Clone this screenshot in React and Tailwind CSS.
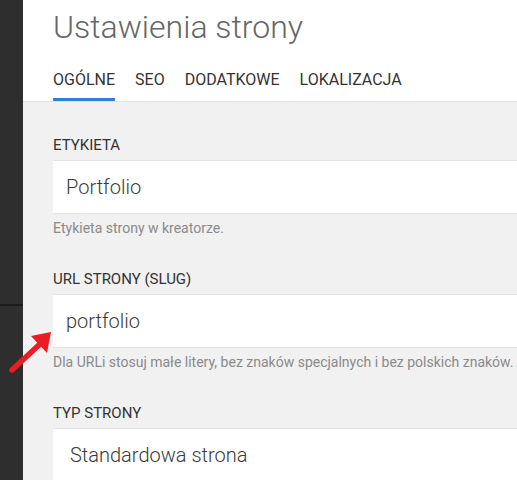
import React from "react";

const tabs = ["OGÓLNE", "SEO", "DODATKOWE", "LOKALIZACJA"];

function Field({ label, value, help, select }) {
  return (
    <div className="mb-8">
      <div className="text-[15px] leading-5 text-[#333] uppercase">{label}</div>
      <div
        className={`mt-[5px] h-[54px] flex items-center bg-white border-y border-[#e3e3e3] ${
          select ? "pl-[17px]" : "pl-[13px]"
        }`}
      >
        <span className="text-[20px] font-light text-[#3a3a3a]">{value}</span>
      </div>
      {help && (
        <div className="mt-[5px] text-[14px] leading-[18px] text-[#8a8a8a] whitespace-nowrap">
          {help}
        </div>
      )}
    </div>
  );
}

export default function App() {
  return (
    <div
      className="relative flex w-[517px] h-[480px] overflow-hidden bg-[#f1f1f1]"
      style={{ fontFamily: "Roboto, 'Noto Sans', sans-serif" }}
    >
      {/* dark sidebar edge */}
      <div className="w-[23px] shrink-0 flex flex-col bg-[#2e2e2e]">
        <div className="h-[306px] border-b-2 border-[#1b1b1b]" />
      </div>

      <div className="flex-1 min-w-0 flex flex-col">
        {/* header */}
        <div className="bg-white border-b border-[#e2e2e2] pl-[30px]">
          <h1 className="pt-[11px] text-[32px] leading-none font-light text-[#666] whitespace-nowrap">
            Ustawienia strony
          </h1>
          <div className="flex gap-5 mt-[27px]">
            {tabs.map((t, i) => (
              <div
                key={t}
                className={`text-[16px] leading-5 pb-[8px] text-[#333] border-b-[3px] ${
                  i === 0 ? "border-[#2f7fd3]" : "border-transparent"
                }`}
              >
                {t}
              </div>
            ))}
          </div>
        </div>

        {/* form */}
        <div className="pl-[30px] pt-[33px]">
          <Field label="Etykieta" value="Portfolio" help="Etykieta strony w kreatorze." />
          <Field
            label="URL strony (slug)"
            value="portfolio"
            help="Dla URLi stosuj małe litery, bez znaków specjalnych i bez polskich znaków."
          />
          <Field label="Typ strony" value="Standardowa strona" select />
        </div>
      </div>

      {/* red annotation arrow */}
      <svg
        className="absolute left-0 top-[326px]"
        width="60"
        height="50"
        viewBox="0 0 60 50"
      >
        <line x1="12" y1="44" x2="40" y2="18" stroke="#ea1c24" strokeWidth="5.5" strokeLinecap="round" />
        <polygon points="51,6 31,10 47,27" fill="#ea1c24" />
      </svg>
    </div>
  );
}
